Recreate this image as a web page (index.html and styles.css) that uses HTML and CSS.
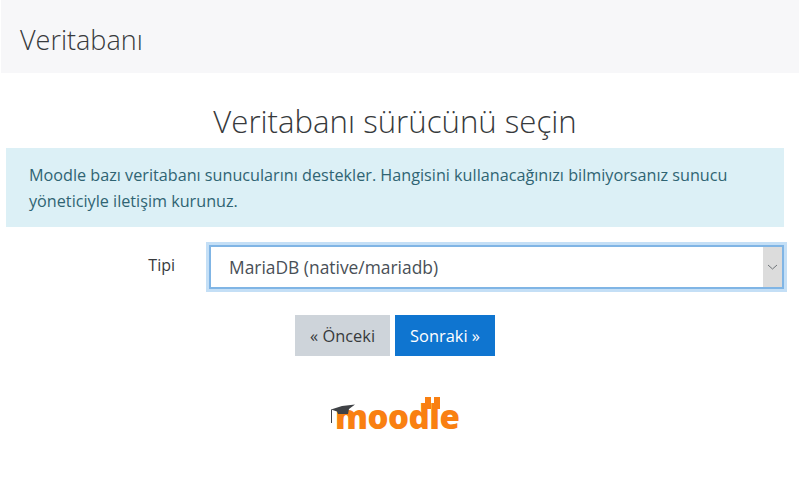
FILE: index.html
```html
<!DOCTYPE html>
<html lang="tr">
    <head>
        <meta charset="utf-8">
        <title>Veritabanı</title>
        <link rel="stylesheet" href="styles.css">
    </head>
    <body>
        <header class="page-header">Veritabanı</header>
        <main class="page-main">
            <h2 class="page-title">Veritabanı sürücünü seçin</h2>
            <div class="alert-info">Moodle bazı veritabanı sunucularını destekler. Hangisini kullanacağınızı bilmiyorsanız sunucu yöneticiyle iletişim kurunuz.</div>
            <div class="form-row">
                <label class="form-label">Tipi</label>
                <div class="select-box">
                    <span class="select-value">MariaDB (native/mariadb)</span>
                    <span class="select-arrow">
                        <svg width="11" height="6" viewBox="0 0 11 6"><path d="M1 1l4.5 4L10 1" fill="none" stroke="#6f7478" stroke-width="1"/></svg>
                    </span>
                </div>
            </div>
            <div class="buttons">
                <button class="btn btn-secondary">« Önceki</button>
                <button class="btn btn-primary">Sonraki »</button>
            </div>
            <div class="logo">
                <svg class="logo-svg" width="132" height="38" viewBox="0 0 132 38">
                    <text class="logo-text" x="5" y="35">moodle</text>
                    <rect x="95" y="3" width="6" height="12" fill="#f98012"/>
                    <rect x="104" y="3" width="6" height="12" fill="#f98012"/>
                    <path d="M1 15.5L12 12L25 10.5L19 15L18 20L8 20L7 17.5Z" fill="#3f4246"/>
                    <path d="M1.5 15.5V29" stroke="#3f4246" stroke-width="1"/>
                </svg>
            </div>
        </main>
    </body>
</html>
```

FILE: styles.css
```css
body {
    margin: 0;
    background: #fff;
    color: #373a3c;
    font-family: "Open Sans", "Noto Sans", sans-serif;
}

.page-header {
    margin: 0 1px;
    height: 73px;
    padding-left: 19px;
    box-sizing: border-box;
    background: #f7f7f9;
    font-size: 27px;
    font-weight: 300;
    line-height: 79px;
}

.page-main {
    padding: 0 16px 0 6px;
}

.page-title {
    margin: 26px 0 0;
    height: 49px;
    text-align: center;
    font-size: 31.2px;
    font-weight: 300;
    line-height: 44px;
}

.alert-info {
    padding: 14px 23px;
    height: 79px;
    box-sizing: border-box;
    background: #dcf0f6;
    color: #2f6473;
    font-size: 16.2px;
    line-height: 26px;
}

.form-row {
    display: flex;
    align-items: center;
    margin-top: 18px;
}

.form-label {
    width: 169px;
    margin-right: 34px;
    padding-bottom: 5px;
    text-align: right;
    font-size: 16px;
}

.select-box {
    flex: 1;
    display: flex;
    height: 44px;
    box-sizing: border-box;
    border: 2px solid #80b5e5;
    box-shadow: 0 0 0 3px #c4dff6;
}

.select-value {
    flex: 1;
    padding-left: 18px;
    font-size: 17.4px;
    line-height: 41px;
    color: #495057;
}

.select-arrow {
    width: 19px;
    display: flex;
    align-items: center;
    justify-content: center;
    background: #dcdcdc;
}

.buttons {
    display: flex;
    justify-content: center;
    gap: 5px;
    margin-top: 26px;
}

.btn {
    height: 41px;
    padding: 0 15px;
    border: 0;
    font-family: inherit;
    font-size: 16.4px;
}

.btn-secondary {
    background: #ced4da;
    color: #373a3c;
}

.btn-primary {
    background: #0f75d0;
    color: #fff;
}

.logo {
    display: flex;
    justify-content: center;
    margin-top: 38px;
    padding-left: 2px;
}

.logo-svg {
    overflow: visible;
}

.logo-text {
    fill: #f98012;
    font-family: "Open Sans", sans-serif;
    font-size: 33px;
    font-weight: 800;
    letter-spacing: -0.5px;
}
```
